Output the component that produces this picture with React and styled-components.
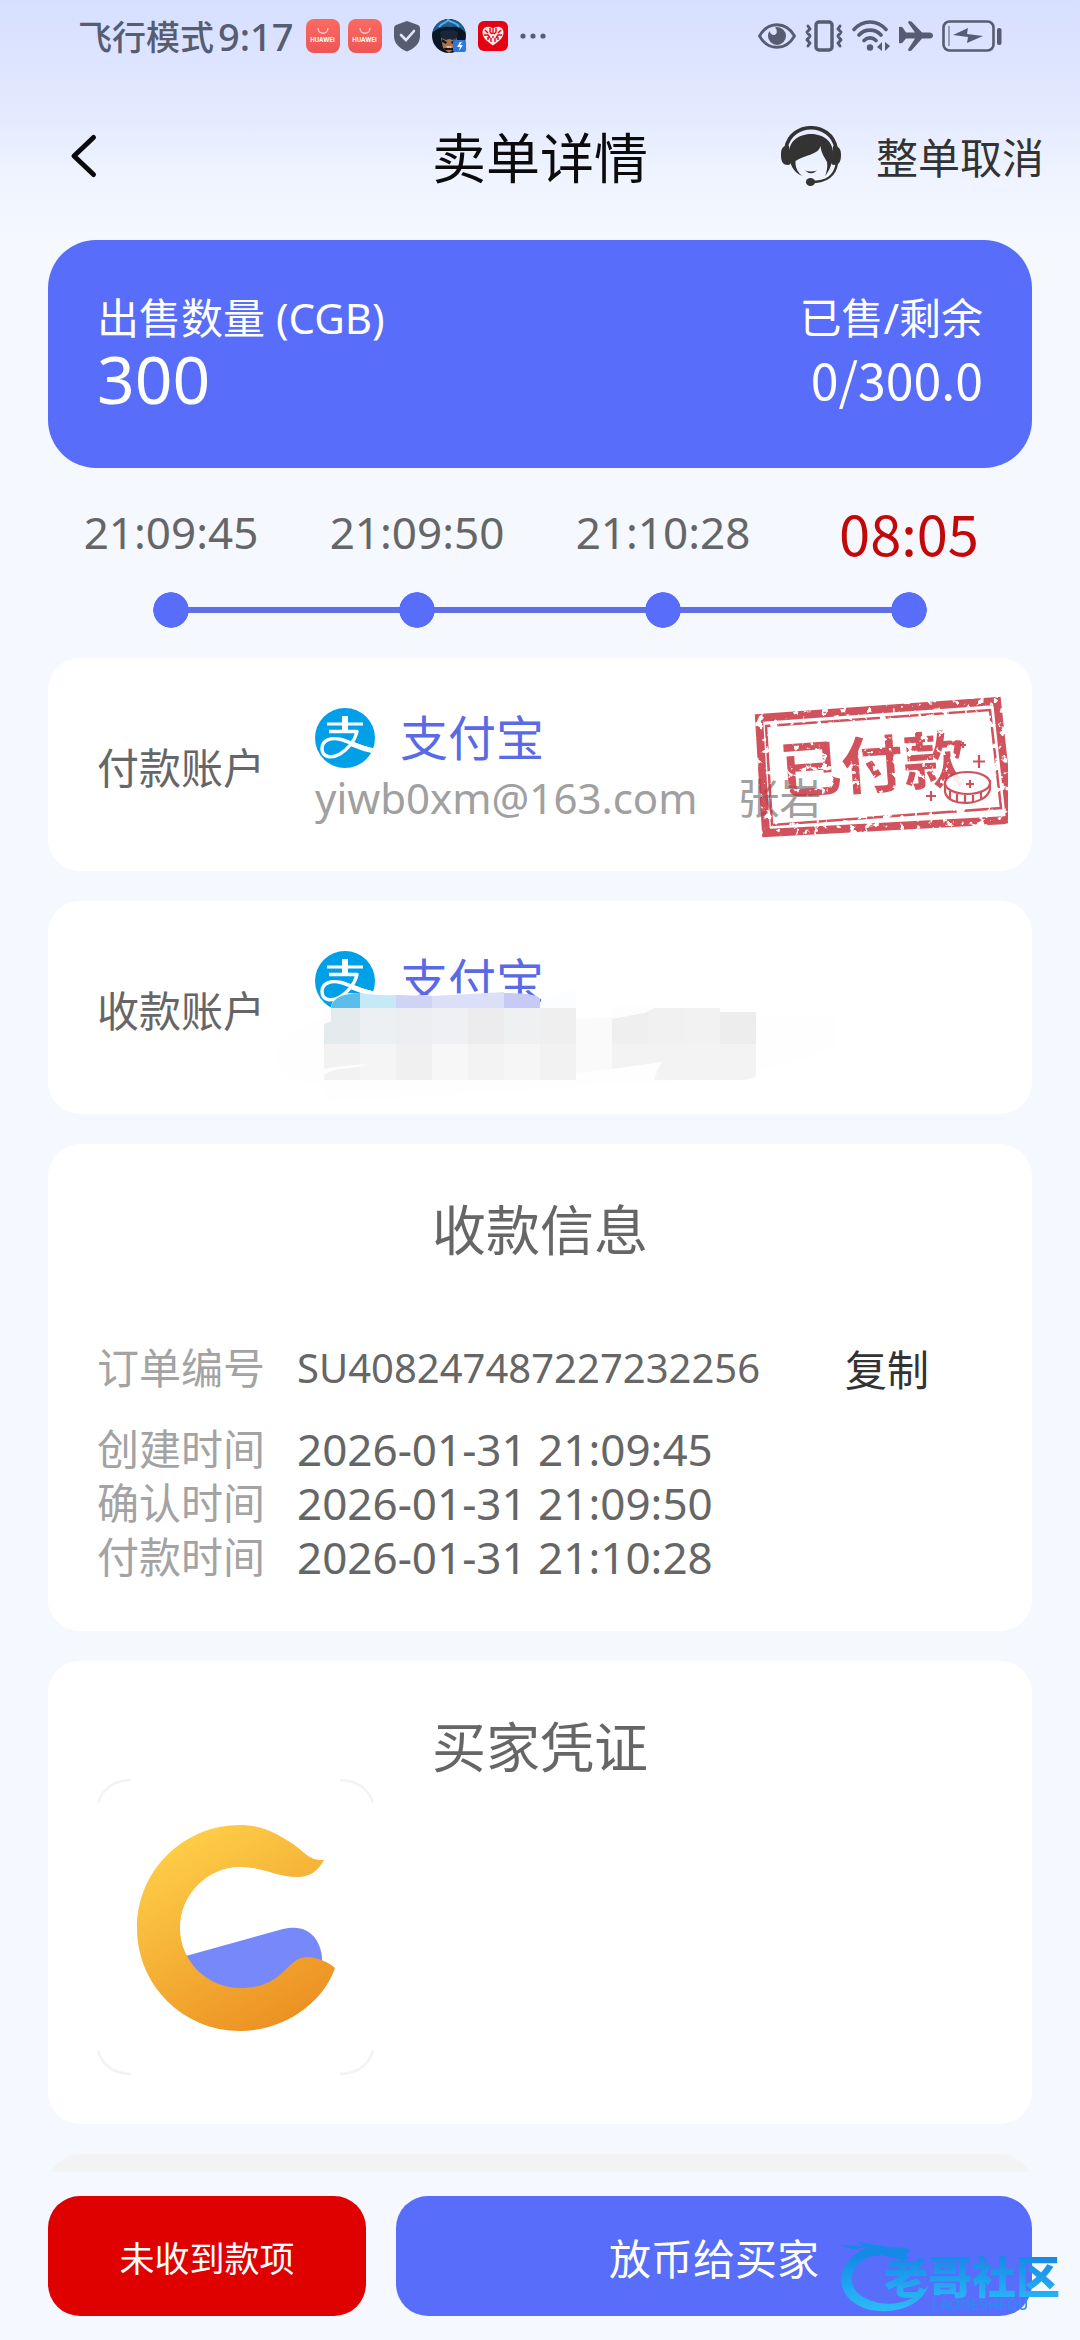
import React from "react";
import styled, { createGlobalStyle } from "styled-components";

const INK = "#565d70";
const PRIMARY = "#586df9";

const GlobalStyle = createGlobalStyle`
  * { box-sizing: border-box; }
  body {
    margin: 0;
    background: #f5f8fe;
    font-family: "Noto Sans", "Noto Sans CJK SC", sans-serif;
    color: #666;
  }
  button { font: inherit; color: inherit; border: 0; padding: 0; background: none; cursor: pointer; }
  h1, h2, p, dl, dd, dt, ol { margin: 0; padding: 0; font-weight: 400; }
  svg { display: block; flex: none; }
`;

const Page = styled.div`
  height: 100vh;
  display: flex;
  flex-direction: column;
  background: linear-gradient(180deg, #d6dfff 0, #e3e9ff 110px, #eef3ff 170px, #f5f8fe 240px);
`;

/* Status bar */
const StatusBar = styled.div`
  flex: none;
  display: flex;
  align-items: center;
  justify-content: space-between;
  height: 72px;
  padding: 0 78px;
  color: ${INK};
`;
const StatusGroup = styled.div`
  display: flex;
  align-items: center;
  gap: ${(p) => p.$gap}px;
`;
const Carrier = styled.span`
  font: 500 34px/48px "Noto Sans CJK SC", sans-serif;
`;
const Clock = styled.span`
  font: 500 38px/48px "Noto Sans", sans-serif;
`;
const StoreBadge = styled.span`
  display: flex;
  flex-direction: column;
  align-items: center;
  justify-content: flex-end;
  width: 34px;
  height: 34px;
  padding-bottom: 9px;
  border-radius: 8px;
  background: linear-gradient(#fb6a61, #ee5556);
  color: #fff;
  font: 700 6px/8px "Inter", sans-serif;
`;

/* Header */
const Header = styled.header`
  flex: none;
  display: grid;
  grid-template-columns: 1fr auto 1fr;
  align-items: center;
  height: 168px;
  padding: 0 36px;
`;
const Title = styled.h1`
  padding-top: 4px;
  font-size: 54px;
  line-height: 72px;
  color: #0b0b0b;
`;
const BackButton = styled.button`
  justify-self: start;
  margin-left: 24px;
  width: 48px;
  height: 48px;
`;
const HeaderActions = styled.div`
  justify-self: end;
  display: flex;
  align-items: center;
  gap: 35px;
`;
const CancelButton = styled.button`
  padding-top: 4px;
  font-size: 42px;
  line-height: 60px;
  color: #333;
`;

/* Content */
const Content = styled.main`
  flex: 1;
  min-height: 0;
  overflow-y: auto;
  scrollbar-width: none;
  padding: 0 48px;
`;
const Summary = styled.section`
  display: flex;
  justify-content: space-between;
  padding: 48px 49px 56px;
  border-radius: 48px;
  background: ${PRIMARY};
  color: #fff;
`;
const SummaryColumn = styled.div`
  text-align: ${(p) => p.$align};
`;
const SummaryLabel = styled.p`
  font-size: 42px;
  line-height: 60px;
`;
const SummaryValue = styled.p`
  font: ${(p) => (p.$large ? '66px/60px "Noto Sans"' : '50px/60px "Noto Sans CJK SC"')}, sans-serif;
  padding-bottom: 4px;
`;

const Timeline = styled.ol`
  display: flex;
  padding: 32px 0 30px;
  list-style: none;
`;
const Step = styled.li`
  flex: 1;
  display: flex;
  flex-direction: column;
  align-items: center;
  gap: 28px;
`;
const StepTime = styled.time`
  font: ${(p) => (p.$active ? '56px/64px "Noto Sans CJK SC"' : '44px/64px "Noto Sans"')}, sans-serif;
  color: ${(p) => (p.$active ? "#c20808" : "#666")};
`;
const Track = styled.span`
  align-self: stretch;
  height: 36px;
  background:
    radial-gradient(circle closest-side, ${PRIMARY} 97%, transparent) center / 36px 36px no-repeat,
    linear-gradient(#5f6fe6, #5f6fe6) ${(p) => (p.$edge === "start" ? "right" : p.$edge === "end" ? "left" : "center")} / ${(p) => (p.$edge ? "50%" : "100%")} 6px no-repeat;
`;

const CardStack = styled.div`
  display: flex;
  flex-direction: column;
  gap: 30px;
`;
const Card = styled.section`
  position: relative;
  border-radius: 32px;
  background: ${(p) => (p.$muted ? "#f3f3f5" : "#fff")};
  padding: ${(p) => p.$pad || "54px 49px 47px"};
  min-height: ${(p) => (p.$muted ? "180px" : "0")};
`;
const AccountCard = styled(Card)`
  display: flex;
  align-items: center;
  padding: 50px 49px 43px;
`;
const AccountLabel = styled.h2`
  flex: none;
  width: 218px;
  font-size: 42px;
  line-height: 60px;
`;
const Method = styled.div`
  display: flex;
  align-items: center;
  gap: 25px;
  font-size: 48px;
  line-height: 60px;
  color: #5a69e6;
`;
const AccountLine = styled.p`
  display: flex;
  gap: 40px;
  height: 60px;
  font-size: 42px;
  line-height: 60px;
  color: #a0a0a0;
`;
const StampBox = styled.div`
  position: absolute;
  right: 24px;
  top: 36px;
`;
const MosaicBox = styled.div`
  position: absolute;
  left: 228px;
  top: 86px;
`;

const CardTitle = styled.h2`
  font-size: 54px;
  line-height: 64px;
  text-align: center;
`;
const Details = styled.dl`
  padding-top: 79px;
`;
const Detail = styled.div`
  display: flex;
  align-items: center;
  margin-bottom: ${(p) => (p.$spaced ? 27 : 0)}px;
  font-size: 42px;
  line-height: 54px;
`;
const Term = styled.dt`
  flex: none;
  width: 200px;
  color: #a3a3a3;
`;
const Value = styled.dd`
  display: flex;
  align-items: center;
  font-size: ${(p) => (p.$code ? 40 : 44)}px;
  line-height: 54px;
`;
const CopyButton = styled.button`
  margin-left: 85px;
  font: 42px/54px "Noto Sans CJK SC", sans-serif;
  color: #333;
`;

const Footer = styled.footer`
  flex: none;
  display: grid;
  grid-template-columns: 1fr 2fr;
  gap: 30px;
  padding: 24px 48px;
  background: #f5f8fe;
`;
const ActionButton = styled.button`
  height: 120px;
  border-radius: 32px;
  background: ${(p) => (p.$danger ? "#df0000" : PRIMARY)};
  color: #fff;
  font-size: ${(p) => (p.$danger ? 35 : 42)}px;
`;
const Watermark = styled.div`
  position: fixed;
  right: 16px;
  bottom: 22px;
  pointer-events: none;
`;

const ShieldIcon = () => (
  <svg width="26" height="32" viewBox="0 0 26 32">
    <path d="M13 1 24 5q2 .8 2 3v8c0 7-5 12.500-13 15.500C5 28.500 0 23 0 16V8q0-2.200 2-3Z" fill={INK} />
    <path d="m7 15 5 5 8-9" fill="none" stroke="#e0e6fb" strokeWidth="2.600" strokeLinecap="round" />
  </svg>
);

const StoreIcon = () => (
  <StoreBadge>
    <svg width="14" height="8" viewBox="0 0 14 8">
      <path d="M2 0c0 7 10 7 10 0" fill="none" stroke="#ffd0cc" strokeWidth="1.300" />
    </svg>
    <span>HUAWEI</span>
  </StoreBadge>
);

const AvatarIcon = () => (
  <svg width="34" height="34" viewBox="0 0 34 34">
    <defs><clipPath id="avatar"><circle cx="17" cy="17" r="17" /></clipPath></defs>
    <g clipPath="url(#avatar)">
      <rect width="34" height="34" fill="#0b1626" />
      <path d="M0 14C2 2 12-3 20 1c8 0 13 6 14 13-5-5-8-7-16-6C9 7 5 10 0 14Z" fill="#1f5f92" />
      <path d="M7 8c3-5 8-4 9-7 3 3 9 2 11 7" fill="none" stroke="#56b4e4" strokeWidth="1.800" />
      <path d="M8 13q9-5 18 0l-1 8-16 0Z" fill="#182638" />
      <path d="m9 19 5 2 3-1 4 1 4-2-2 10-6 5-6-5Z" fill="#a67352" />
      <path d="m10 20 5 3-1 2-4-2Zm14 0-5 3 1 2 4-2ZM12 29h9v2h-8Z" fill="#1c1413" />
      <path d="M14 27h6l-1 2h-4Z" fill="#e8b187" />
    </g>
    <rect x="21" y="21" width="13" height="12" rx="2" fill="#2c77e0" />
    <path d="m28 23-3 5h3l-1 4 4-6h-3l2-3Z" fill="#fff" />
  </svg>
);

const HeartAppIcon = () => (
  <svg width="30" height="30" viewBox="0 0 30 30">
    <rect width="30" height="30" rx="6" fill="#e60012" />
    <path d="M15 8C12 4 4 5 4.500 12c.5 6 6 9 10.500 12.500C19.500 21 25 18 25.500 12 26 5 18 4 15 8Z" fill="#ffe9e9" />
    <path d="M15 8v5m-3-6v4l2 2m4-6v4l-2 2M7 9l3 3m13-3-3 3M6 14h4l2 3m12-3h-4l-2 3M13 17v4m4-4v4M10 16v3m10-3v3M15 15v2" stroke="#e60012" strokeWidth="1.400" fill="none" />
  </svg>
);

const DotsIcon = () => (
  <svg width="26" height="8" viewBox="0 0 26 8" fill={INK}>
    <circle cx="3" cy="4" r="2.600" /><circle cx="13" cy="4" r="2.600" /><circle cx="23" cy="4" r="2.600" />
  </svg>
);

const EyeIcon = () => (
  <svg width="38" height="28" viewBox="0 0 38 28">
    <path d="M1.500 14C10-1 28-1 36.500 14 28 29 10 29 1.500 14Z" fill="none" stroke={INK} strokeWidth="2.800" />
    <path d="M19 5a9 9 0 1 1-9 9c0-2 .6-3.500 1.500-5 1 3 3 4.500 5 4 3-.8 3-5 .5-7.500Z" fill={INK} />
  </svg>
);

const VibrateIcon = () => (
  <svg width="38" height="32" viewBox="0 0 38 32" fill="none" stroke={INK} strokeWidth="3" strokeLinecap="round" strokeLinejoin="round">
    <rect x="11" y="2" width="16" height="28" rx="3" strokeWidth="3.400" />
    <path d="m3 6 2 3-3 3 3 4-3 4 3 3-2 3M35 6l-2 3 3 3-3 4 3 4-3 3 2 3" />
  </svg>
);

const WifiIcon = () => (
  <svg width="38" height="32" viewBox="0 0 38 32" fill="none" stroke={INK} strokeWidth="3.600" strokeLinecap="round">
    <path d="M2 9.500C11-.5 25-.5 34 9.500M7 15c6-6.500 16-6.500 22 0M12 20.500c3.500-3.500 8.500-3.500 12 0" />
    <circle cx="18" cy="27.500" r="3.200" fill={INK} stroke="none" />
    <path d="M30 22v9l-5-4ZM33 22v9l5-5Z" fill={INK} stroke="none" />
  </svg>
);

const PlaneIcon = () => (
  <svg width="34" height="32" viewBox="0 0 34 32" fill={INK}>
    <path d="M0 7q3-1 4 1l3 4.500h9L9 2.500Q9.500 0 12.500 1.500L23 12.500h8q3 .5 3 3t-3 3h-8L12.500 30.500Q9.500 32 9 29.500l7-11H7L4 22q-1 2-4 1Z" />
  </svg>
);

const BatteryIcon = () => (
  <svg width="60" height="32" viewBox="0 0 60 32">
    <rect x="1.500" y="1.500" width="50" height="29" rx="6" fill="none" stroke={INK} strokeWidth="2.600" />
    <path d="M7 6v20" stroke={INK} strokeOpacity=".5" strokeWidth="2" />
    <path d="m11 15 15-7-1 6 16 2-16 7 1-6Z" fill={INK} />
    <rect x="55" y="8" width="4.500" height="17" rx="2" fill={INK} />
  </svg>
);

const BackIcon = () => (
  <svg width="48" height="48" viewBox="0 0 48 48">
    <path d="M33.500 5.500 14 24l19.500 18.500" fill="none" stroke="#0b0b0b" strokeWidth="5" strokeLinecap="round" strokeLinejoin="round" />
  </svg>
);

const SupportIcon = () => (
  <svg width="60" height="60" viewBox="0 0 60 60" fill="#333">
    <path d="M5 22C10-5 50-5 55 22" fill="none" stroke="#333" strokeWidth="3.600" />
    <path d="M8 20C1 19 0 24 0 29s1 10 7 10q3 0 3-4-2-7-2-15ZM52 20c7 0 8 4 8 9s-1 10-7 10q-3 0-3-4 2-7 2-15Z" />
    <path d="M8 26C9 2 51 2 52 26c0 10-3 18-8 24q3-7 2-14c-2-4-6-9-6.500-16C37 29 26 28 14.500 35 14 42 17 46 21 50 12 46 8 38 8 26Z" />
    <path d="M24 44.500q6 2 12 0-6 5.500-12 0Z" />
    <path d="M56 37C54 50 46 56 30 56" fill="none" stroke="#333" strokeWidth="2.400" />
    <ellipse cx="29.500" cy="56" rx="4.600" ry="4" />
  </svg>
);

const AlipayIcon = () => (
  <svg width="60" height="60" viewBox="0 0 60 60">
    <defs><clipPath id="alipay"><circle cx="30" cy="30" r="30" /></clipPath></defs>
    <circle cx="30" cy="30" r="30" fill="#00a0e9" />
    <g clipPath="url(#alipay)" fill="none" stroke="#fff">
      <path d="M30 8v16" strokeWidth="6" />
      <path d="M12 16h36" strokeWidth="3" />
      <path d="M14 23.500h28C40 33 32 42 25 46 17 50.500 7 50 7 40.500 7 32 16 29 26 31.500 35 34 46 39.500 62 43" strokeWidth="3.400" strokeLinejoin="round" />
      <path d="M37 36q11 5 24 7.500" strokeWidth="5" />
    </g>
  </svg>
);

const PaidStamp = () => (
  <svg width="254" height="144" viewBox="754 694 254 144" role="img" aria-label="已付款">
    <defs>
      <filter id="worn" filterUnits="userSpaceOnUse" x="750" y="690" width="262" height="152">
        <feTurbulence type="fractalNoise" baseFrequency=".14" numOctaves="3" seed="8" />
        <feColorMatrix values="0 0 0 0 0  0 0 0 0 0  0 0 0 0 0  0 0 0 -12 8.200" result="mask" />
        <feComposite in="SourceGraphic" in2="mask" operator="in" />
      </filter>
    </defs>
    <g filter="url(#worn)" opacity=".84" stroke="#c9303c" fill="none">
      <path d="m759 718 238-17 13 119-244 13Z" strokeWidth="8" />
      <path d="m766 726 224-16 11 98-229 17Z" strokeWidth="2.500" />
      <text x="781" y="794" transform="rotate(-4 781 794)" fill="#c9303c" stroke="none" fontFamily="Noto Sans CJK SC, sans-serif" fontSize="62" fontWeight="700">已付款</text>
    </g>
    <g stroke="#c9404a" strokeWidth="2.200" opacity=".9">
      <path d="M945 783v9c3 16 42 14 45-3v-9" fill="#fff" />
      <ellipse cx="967.500" cy="783" rx="22.500" ry="11" fill="#fff" />
      <path d="M950 791v7m7-4v8m8-7v8m8-8v8m8-11v8" />
      <path d="M979 755v13m-6-6.500h12M931 791v10m-5-5h10M970 780v8m-4-4h8M963 742v6m-3-3h6" />
    </g>
  </svg>
);

const MOSAIC_TOP = ["#e4ebed", "#edf0f3", "#eceef1", "#eff0f3", "#ececee", "#eff0f2", "#efefef"];
const MOSAIC_LOW = ["#f2f2f2", "#f5f5f5", "#f0f0f0", "#f7f7f7", "#f3f3f3", "#f6f6f6", "#f2f2f2"];
const MOSAIC_RIGHT = ["#efefef", "#f1f1f1", "#f2f2f2", "#ededed"];

const Mosaic = () => (
  <svg width="560" height="126" viewBox="276 987 560 126">
    <path d="M276 1055q4-28 54-38h510v28q-80 38-240 40l-270 17-10-20q-44 2-44-27Z" fill="#fefefe" />
    <path d="M331 1006q3-12 20-13 40 4 80 2 60-5 109 2v60H331Z" fill="#fff" />
    <path d="M331 1008q1-14 29-15v15Z" fill="#5bbde9" />
    <path d="M360 993q20 3 36 2v13h-36Z" fill="#c5e9f7" />
    <path d="M396 995l36 1v12h-36Z" fill="#cfd3f5" />
    <path d="M432 996q40-2 72-4v16h-72Z" fill="#dcdff8" />
    <path d="M504 993q34 0 36 6v9h-36Z" fill="#c6caf4" />
    <path d="M540 1002 576 988v20h-36Z" fill="#fbfdff" />
    {MOSAIC_TOP.map((c, i) => <rect key={i} x={324 + i * 36} y="1008" width="36" height="36" fill={c} />)}
    {MOSAIC_LOW.map((c, i) => <rect key={i} x={324 + i * 36} y="1044" width="36" height="36" fill={c} />)}
    <path d="M576 1020 612 1017v52l-36 4Z" fill="#fafafa" />
    {MOSAIC_RIGHT.map((c, i) => <rect key={i} x={612 + i * 36} y={i === 3 ? 1012 : 1008} width="36" height="36" fill={c} />)}
    <path d="M612 1044h144v32q-6 4-16 4h-86q4-12 8-18l-50 7Z" fill="#f3f3f3" />
    <path d="M612 1007h45l-13 6-32 6Z" fill="#fdfdfd" />
    <path d="M323 1007h8v14l-8 4ZM323 1069l20-3 24-2-3 2-30 4-11 5Z" fill="#fdfdfd" />
  </svg>
);

const VoucherImage = () => (
  <svg width="277" height="296" viewBox="0 0 277 296" role="img" aria-label="买家凭证">
    <defs>
      <linearGradient id="gold" x1=".2" y1="0" x2=".75" y2="1">
        <stop offset="0" stopColor="#ffd24a" /><stop offset="1" stopColor="#eb8f22" />
      </linearGradient>
    </defs>
    <path d="M1 24Q8 2 34 1M243 1q26 1 33 23M1 272q7 22 33 23M243 295q26-1 33-23" fill="none" stroke="#f3f3f3" strokeWidth="2.500" />
    <path d="M87 177.500 186 150c28-7 41 14 39 38l-82 26-40-10Z" fill="#7788fb" />
    <path d="M227 81C210 82 208 71 188 60 174 51 160 46 143 46 86 46 40 92 40 149S86 252 143 252C187 252 226 224 238 189 230 182 219 178 210 178 188 179 188 209 143 209 110 209 83 182 83 149S110 88 143 88C167 88 180 98 200 98 213 98 221 92 227 81Z" fill="url(#gold)" />
  </svg>
);

const BrandMark = () => (
  <svg width="226" height="76" viewBox="838 2242 226 76">
    <defs>
      <linearGradient id="brand" x1="0" y1="0" x2="0" y2="1">
        <stop offset=".2" stopColor="#1489e6" /><stop offset="1" stopColor="#2cbcf8" />
      </linearGradient>
    </defs>
    <path d="M868 2247C832 2262 832 2300 870 2310 900 2315 923 2303 929 2285 916 2300 898 2306 880 2303 848 2297 842 2272 868 2257l14-2 20 5 7-2-4-4 6-2-5-4-18-1-30-5 5 4-24-1 14 4Z" fill="url(#brand)" />
    <text x="884" y="2294" fill="url(#brand)" fontFamily="Noto Sans CJK SC, sans-serif" fontSize="44" fontWeight="900">老哥社区</text>
    <text x="932" y="2310" fill="#2a8df2" fontFamily="Inter, sans-serif" fontSize="14" fontWeight="500">LAOGESHEQU</text>
  </svg>
);

const STEPS = ["21:09:45", "21:09:50", "21:10:28", "08:05"];
const TIMES = [
  ["创建时间", "2026-01-31 21:09:45"],
  ["确认时间", "2026-01-31 21:09:50"],
  ["付款时间", "2026-01-31 21:10:28"],
];

export default function App() {
  return (
    <Page>
      <GlobalStyle />
      <StatusBar>
        <StatusGroup $gap={12}>
          <StatusGroup $gap={4}>
            <Carrier>飞行模式</Carrier>
            <Clock>9:17</Clock>
          </StatusGroup>
          <StatusGroup $gap={8}>
            <StoreIcon />
            <StoreIcon />
          </StatusGroup>
          <StatusGroup $gap={12}>
            <ShieldIcon />
            <AvatarIcon />
            <HeartAppIcon />
          </StatusGroup>
          <DotsIcon />
        </StatusGroup>
        <StatusGroup $gap={9}>
          <EyeIcon />
          <VibrateIcon />
          <WifiIcon />
          <PlaneIcon />
          <BatteryIcon />
        </StatusGroup>
      </StatusBar>

      <Header>
        <BackButton aria-label="返回"><BackIcon /></BackButton>
        <Title>卖单详情</Title>
        <HeaderActions>
          <button aria-label="客服"><SupportIcon /></button>
          <CancelButton>整单取消</CancelButton>
        </HeaderActions>
      </Header>

      <Content>
        <Summary>
          <SummaryColumn $align="left">
            <SummaryLabel>出售数量 (CGB)</SummaryLabel>
            <SummaryValue $large>300</SummaryValue>
          </SummaryColumn>
          <SummaryColumn $align="right">
            <SummaryLabel>已售/剩余</SummaryLabel>
            <SummaryValue>0/300.0</SummaryValue>
          </SummaryColumn>
        </Summary>

        <Timeline>
          {STEPS.map((time, i) => (
            <Step key={time}>
              <StepTime $active={i === 3}>{time}</StepTime>
              <Track $edge={i === 0 ? "start" : i === 3 ? "end" : undefined} />
            </Step>
          ))}
        </Timeline>

        <CardStack>
          <AccountCard>
            <AccountLabel>付款账户</AccountLabel>
            <div>
              <Method><AlipayIcon />支付宝</Method>
              <AccountLine><span>yiwb0xm@163.com</span><span>张岩</span></AccountLine>
            </div>
            <StampBox><PaidStamp /></StampBox>
          </AccountCard>

          <AccountCard>
            <AccountLabel>收款账户</AccountLabel>
            <div>
              <Method><AlipayIcon />支付宝</Method>
              <AccountLine />
            </div>
            <MosaicBox><Mosaic /></MosaicBox>
          </AccountCard>

          <Card>
            <CardTitle>收款信息</CardTitle>
            <Details>
              <Detail $spaced>
                <Term>订单编号</Term>
                <Value $code>
                  SU408247487227232256
                  <CopyButton>复制</CopyButton>
                </Value>
              </Detail>
              {TIMES.map(([label, value]) => (
                <Detail key={label}>
                  <Term>{label}</Term>
                  <Value>{value}</Value>
                </Detail>
              ))}
            </Details>
          </Card>

          <Card $pad="54px 49px 49px">
            <CardTitle>买家凭证</CardTitle>
            <VoucherImage />
          </Card>

          <Card $muted />
        </CardStack>
      </Content>

      <Footer>
        <ActionButton $danger>未收到款项</ActionButton>
        <ActionButton>放币给买家</ActionButton>
      </Footer>
      <Watermark><BrandMark /></Watermark>
    </Page>
  );
}
